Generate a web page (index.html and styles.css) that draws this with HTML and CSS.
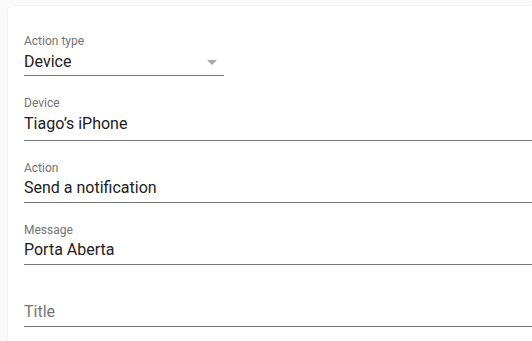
FILE: index.html
```html
<!DOCTYPE html>
<html lang="en">
<head>
<meta charset="utf-8">
<title>Action</title>
<link rel="stylesheet" href="styles.css">
</head>
<body>
<div class="card">
  <div class="field field--dropdown">
    <div class="field__label">Action type</div>
    <div class="field__value">Device
      <svg class="field__arrow" viewBox="0 0 24 24" width="24" height="24" aria-hidden="true"><path d="M7 10l5 5 5-5z"/></svg>
    </div>
  </div>
  <div class="field field--device">
    <div class="field__label">Device</div>
    <div class="field__value">Tiago’s iPhone</div>
  </div>
  <div class="field">
    <div class="field__label">Action</div>
    <div class="field__value">Send a notification</div>
  </div>
  <div class="field">
    <div class="field__label">Message</div>
    <div class="field__value">Porta Aberta</div>
  </div>
  <div class="field field--empty">
    <div class="field__label field__label--hidden">&nbsp;</div>
    <div class="field__value field__value--placeholder">Title</div>
  </div>
</div>
</body>
</html>
```
FILE: styles.css
```css
html, body {
  margin: 0;
  padding: 0;
  height: 100%;
  overflow: hidden;
  background: #fafafa;
  font-family: Roboto, "Liberation Sans", sans-serif;
}

body {
  display: flex;
  flex-direction: column;
  padding: 6px 0 0 8px;
  box-sizing: border-box;
}

.card {
  flex: 1;
  background: #fff;
  border-radius: 4px 0 0 0;
  box-shadow: 0 0 2px rgba(0, 0, 0, 0.08), 0 1px 1px rgba(0, 0, 0, 0.04);
  padding: 8px 0 0 16px;
  box-sizing: border-box;
  display: flex;
  flex-direction: column;
  overflow: hidden;
}

.field {
  padding: 19px 0 2px 0;
  border-bottom: 1px solid #757575;
  display: flex;
  flex-direction: column;
}

.field__label {
  font-size: 12px;
  line-height: 16px;
  color: #737373;
}

.field__label--hidden {
  visibility: hidden;
}

.field__value {
  font-size: 16px;
  line-height: 24px;
  color: #212121;
  display: flex;
  align-items: center;
  justify-content: space-between;
}

.field__value--placeholder {
  color: #757575;
}

.field--dropdown {
  width: 200px;
  padding-bottom: 1px;
}

.field--device {
  padding-bottom: 4px;
}

.field--device .field__value {
  margin-top: 1px;
}

.field__arrow {
  fill: #ababab;
  margin-top: 1px;
}
```
